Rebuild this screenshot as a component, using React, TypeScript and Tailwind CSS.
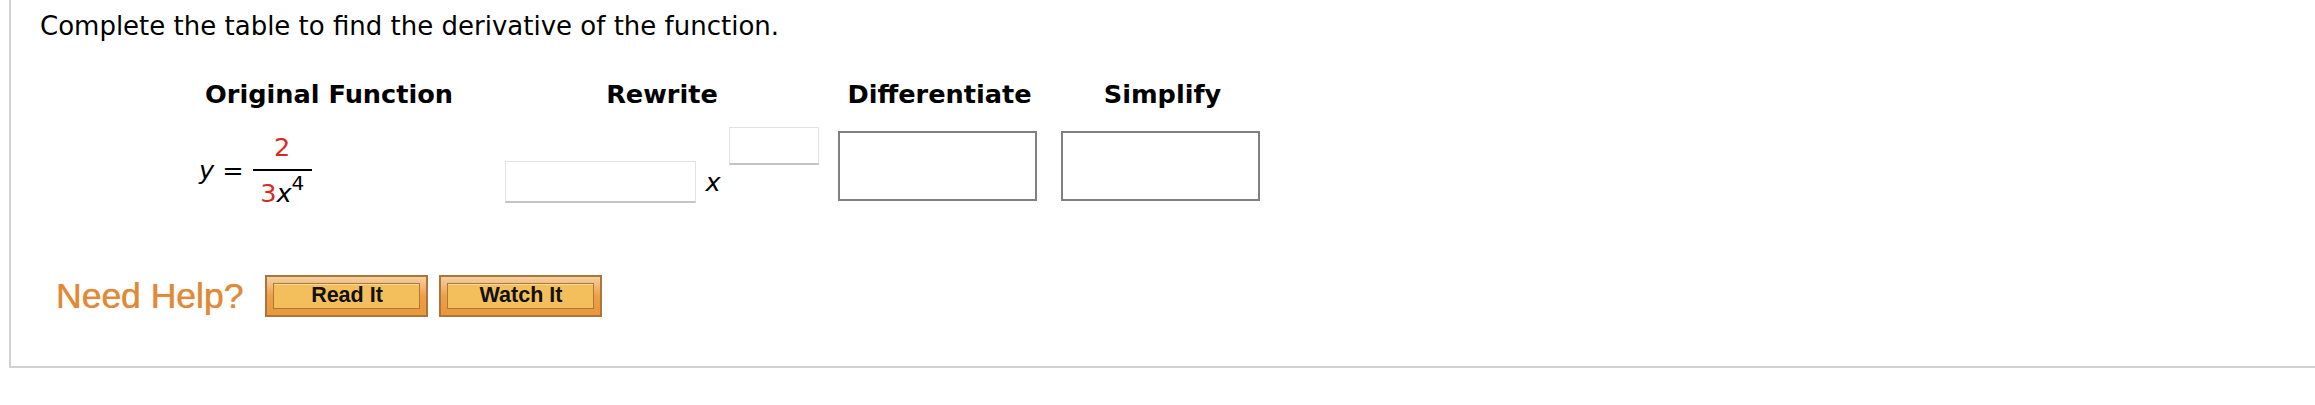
import React from "react";

function HelpButton({ label }: { label: string }) {
  return (
    <button
      type="button"
      className="w-[163px] h-[42px] p-[6px] border-2 border-[#a8763e] bg-linear-to-b from-[#f5cfa0] via-[#ee9f45] to-[#ea963c]"
    >
      <span className="flex h-full w-full items-center justify-center border border-[#a97a3c] bg-[#f3bf5c] shadow-[inset_0_1px_0_#f9dc9c] font-['Liberation_Sans',Arial,sans-serif] text-[21.5px] font-bold leading-none text-[#111]">
        {label}
      </span>
    </button>
  );
}

function AnswerBox() {
  return <div className="w-[199px] h-[70px] border-2 border-[#808080] bg-white" />;
}

export default function App() {
  return (
    <div className="w-[2315px] h-[405px] bg-white text-black font-['DejaVu_Sans',Verdana,sans-serif]">
      {/* question panel */}
      <div className="ml-[9px] h-[368px] border-l-2 border-b-2 border-[#d2d2d2] pl-[29px] pt-[11px]">
        <p className="text-[26px] leading-[30px]">
          Complete the table to find the derivative of the function.
        </p>

        {/* table */}
        <div className="mt-[38px] ml-[159px] grid grid-cols-[297px_332px_223px_223px] gap-y-[16px] text-[25.6px]">
          <div className="pl-[6px] font-bold leading-[30px]">Original Function</div>
          <div className="text-center font-bold leading-[30px]">Rewrite</div>
          <div className="text-center font-bold leading-[30px]">Differentiate</div>
          <div className="text-center font-bold leading-[30px]">Simplify</div>

          {/* original function */}
          <div className="flex items-center pt-[11px]">
            <span className="leading-[30px] whitespace-pre">
              <i>y</i> =
            </span>
            <div className="ml-[9px] flex w-[59px] flex-col items-center">
              <div className="flex h-[33px] items-end pb-[9px] leading-[26px] text-[#d8291f]">2</div>
              <div className="h-[2px] w-full bg-black" />
              <div className="flex h-[33px] items-start pt-[9px] leading-[26px]">
                <span className="text-[#d8291f]">3</span>
                <i>x</i>
                <span className="relative -top-[4px] text-[20px] leading-[14px]">4</span>
              </div>
            </div>
          </div>

          {/* rewrite */}
          <div className="flex items-start justify-center">
            <div className="mt-[36px] w-[191px] h-[42px] border border-b-2 border-[#e2e2e2] border-b-[#c4c4c4] bg-white" />
            <i className="ml-[9px] mt-[42px] leading-[30px]">x</i>
            <div className="ml-[8px] mt-[2px] w-[90px] h-[38px] border border-b-2 border-[#e2e2e2] border-b-[#c4c4c4] bg-white" />
          </div>

          {/* differentiate */}
          <div className="flex justify-center pt-[6px] pr-[4px]">
            <AnswerBox />
          </div>

          {/* simplify */}
          <div className="flex justify-center pt-[6px] pr-[4px]">
            <AnswerBox />
          </div>
        </div>

        {/* help */}
        <div className="mt-[71px] ml-[16px] flex items-center">
          <span className="mr-[22px] font-['Liberation_Sans',Arial,sans-serif] text-[35.5px] leading-[40px] text-[#e0893a] [text-shadow:0_0_1px_#e0893a]">
            Need Help?
          </span>
          <HelpButton label="Read It" />
          <div className="w-[11px]" />
          <HelpButton label="Watch It" />
        </div>
      </div>
    </div>
  );
}
